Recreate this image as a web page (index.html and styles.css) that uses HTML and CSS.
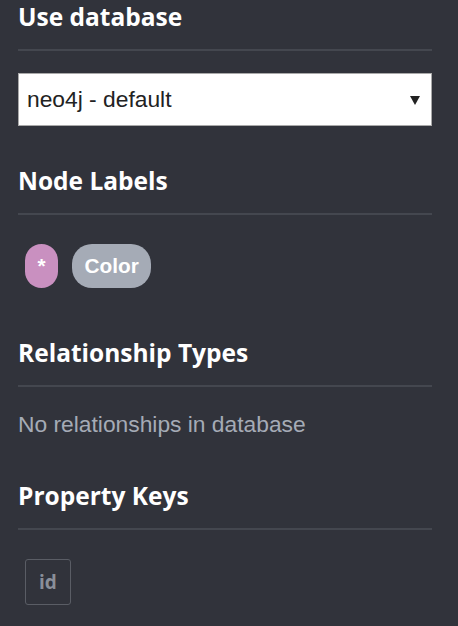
FILE: index.html
```html
<!DOCTYPE html>
<html>
<head>
<meta charset="utf-8">
<link rel="stylesheet" href="styles.css">
</head>
<body>
<div class="drawer">
  <section class="sec sec-db">
    <h3 class="title">Use database</h3>
    <div class="select">
      <span class="select-text">neo4j - default</span>
      <svg class="caret" width="10" height="9" viewBox="0 0 10 9"><polygon points="0,0 10,0 5,9" fill="#222"/></svg>
    </div>
  </section>
  <section class="sec sec-labels">
    <h3 class="title">Node Labels</h3>
    <div class="pills">
      <span class="pill pill-all">*</span>
      <span class="pill pill-color">Color</span>
    </div>
  </section>
  <section class="sec sec-rels">
    <h3 class="title">Relationship Types</h3>
    <p class="empty">No relationships in database</p>
  </section>
  <section class="sec sec-props">
    <h3 class="title">Property Keys</h3>
    <div class="keys">
      <span class="key">id</span>
    </div>
  </section>
</div>
</body>
</html>
```
FILE: styles.css
```css
html, body {
  margin: 0;
  padding: 0;
  background: #31333b;
}
body {
  width: 458px;
  height: 626px;
  overflow: hidden;
}
.drawer {
  padding: 4px 26px 0 18px;
}
.title {
  margin: 0;
  font-family: "Open Sans", "DejaVu Sans", sans-serif;
  font-weight: 700;
  font-size: 24.5px;
  line-height: 25px;
  color: #ffffff;
  padding-bottom: 20px;
  border-bottom: 2px solid #44474f;
}
.sec-labels { margin-top: 42px; }
.sec-rels { margin-top: 52px; }
.sec-props { margin-top: 47px; }

.select {
  margin-top: 22px;
  height: 53px;
  box-sizing: border-box;
  background: #ffffff;
  border: 1px solid #a9a9a9;
  display: flex;
  align-items: center;
  justify-content: space-between;
  padding: 0 11px 0 8px;
}
.select-text {
  font-family: "Liberation Sans", Arial, sans-serif;
  font-size: 22.8px;
  color: #222222;
}
.caret {
  display: block;
  margin-top: 1px;
}

.pills {
  margin-top: 29px;
  display: flex;
  gap: 14px;
  padding-left: 7px;
}
.pill {
  height: 44px;
  padding: 0 12.5px;
  border-radius: 20px;
  display: flex;
  align-items: center;
  font-family: "Liberation Sans", Arial, sans-serif;
  font-weight: 700;
  font-size: 20.8px;
  color: #ffffff;
}
.pill-all { background: #c990c0; }
.pill-color { background: #a5abb6; }

.empty {
  margin: 25px 0 0;
  font-family: "Liberation Sans", Arial, sans-serif;
  font-size: 22.8px;
  line-height: 24px;
  color: #a5abb6;
}

.keys {
  margin-top: 29px;
  display: flex;
  padding-left: 7px;
}
.key {
  height: 46px;
  box-sizing: border-box;
  padding: 0 13px;
  border: 1px solid #5a5d65;
  border-radius: 3px;
  display: flex;
  align-items: center;
  font-family: "Open Sans", "DejaVu Sans", sans-serif;
  font-weight: 700;
  font-size: 19px;
  color: #8a8f99;
}
```
